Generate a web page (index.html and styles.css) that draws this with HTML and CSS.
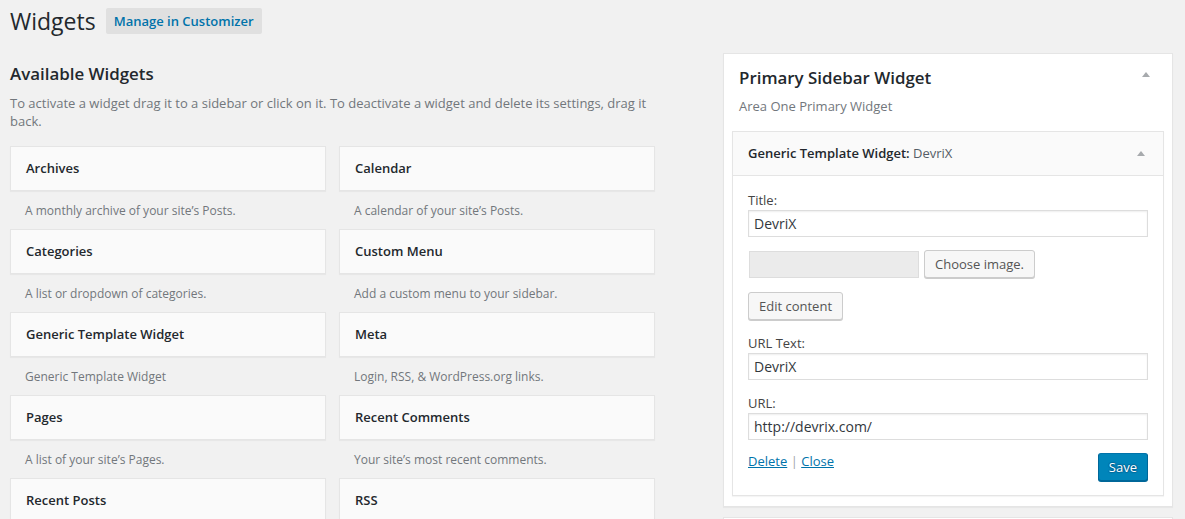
FILE: index.html
```html
<!DOCTYPE html>
<html lang="en">
<head>
<meta charset="utf-8">
<title>Widgets</title>
<link rel="stylesheet" href="styles.css">
</head>
<body>
<div class="page-head">
  <h1 class="page-title">Widgets</h1>
  <a class="title-action" href="#">Manage in Customizer</a>
</div>

<div class="main">
  <section class="available">
    <h2 class="section-title">Available Widgets</h2>
    <p class="section-desc">To activate a widget drag it to a sidebar or click on it. To deactivate a widget and delete its settings, drag it back.</p>
    <div class="widget-grid">
      <div class="widget-item"><div class="widget-top">Archives</div><div class="widget-desc">A monthly archive of your site’s Posts.</div></div>
      <div class="widget-item"><div class="widget-top">Calendar</div><div class="widget-desc">A calendar of your site’s Posts.</div></div>
      <div class="widget-item"><div class="widget-top">Categories</div><div class="widget-desc">A list or dropdown of categories.</div></div>
      <div class="widget-item"><div class="widget-top">Custom Menu</div><div class="widget-desc">Add a custom menu to your sidebar.</div></div>
      <div class="widget-item"><div class="widget-top">Generic Template Widget</div><div class="widget-desc">Generic Template Widget</div></div>
      <div class="widget-item"><div class="widget-top">Meta</div><div class="widget-desc">Login, RSS, &amp; WordPress.org links.</div></div>
      <div class="widget-item"><div class="widget-top">Pages</div><div class="widget-desc">A list of your site’s Pages.</div></div>
      <div class="widget-item"><div class="widget-top">Recent Comments</div><div class="widget-desc">Your site’s most recent comments.</div></div>
      <div class="widget-item"><div class="widget-top">Recent Posts</div><div class="widget-desc">Your site’s most recent Posts.</div></div>
      <div class="widget-item"><div class="widget-top">RSS</div><div class="widget-desc">Entries from any RSS or Atom feed.</div></div>
    </div>
  </section>

  <aside class="sidebars">
    <div class="sidebar-panel">
      <div class="sidebar-head">
        <div class="sidebar-head-row">
          <h2 class="sidebar-title">Primary Sidebar Widget</h2>
          <svg class="toggle-arrow sidebar-arrow" width="8" height="5" viewBox="0 0 8 5"><polygon points="4,0 8,5 0,5" fill="#a7aaad"/></svg>
        </div>
        <p class="sidebar-desc">Area One Primary Widget</p>
      </div>

      <div class="widget-open">
        <div class="widget-open-top">
          <span class="widget-open-title">Generic Template Widget:<span class="in-title"> DevriX</span></span>
          <svg class="toggle-arrow" width="8" height="5" viewBox="0 0 8 5"><polygon points="4,0 8,5 0,5" fill="#a7aaad"/></svg>
        </div>
        <div class="widget-form">
          <label class="field-label">Title:</label>
          <input class="text-input" type="text" value="DevriX">

          <div class="image-row">
            <input class="text-input image-input" type="text" disabled>
            <button class="btn" type="button">Choose image.</button>
          </div>

          <div class="edit-row"><button class="btn" type="button">Edit content</button></div>

          <label class="field-label spaced">URL Text:</label>
          <input class="text-input" type="text" value="DevriX">

          <label class="field-label spaced">URL:</label>
          <input class="text-input" type="text" value="http://devrix.com/">

          <div class="widget-controls">
            <div class="control-links"><a href="#">Delete</a> <span class="sep">|</span> <a href="#">Close</a></div>
            <button class="btn btn-primary" type="button">Save</button>
          </div>
        </div>
      </div>
    </div>
    <div class="sidebar-panel next-panel"></div>
  </aside>
</div>
</body>
</html>
```

FILE: styles.css
```css
html, body {
  margin: 0;
  padding: 0;
  background: #f1f1f1;
}

body {
  font-family: "Open Sans", "Noto Sans", sans-serif;
  font-size: 13px;
  line-height: 18px;
  color: #444;
}

.page-head {
  display: flex;
  align-items: center;
  height: 26px;
  padding: 8px 0 0 10px;
}

.page-title {
  margin: 0;
  font-size: 23px;
  font-weight: 400;
  line-height: 26px;
  color: #23282d;
}

.title-action {
  margin-left: 10px;
  padding: 0 8px;
  height: 26px;
  line-height: 26px;
  background: #e0e0e0;
  border-radius: 2px;
  color: #0073aa;
  font-size: 13px;
  font-weight: 600;
  text-decoration: none;
}

.main {
  display: flex;
  justify-content: space-between;
  align-items: flex-start;
  padding: 0 12px 0 10px;
}

.available {
  width: 645px;
}

.section-title {
  margin: 28px 0 0;
  font-size: 16.9px;
  font-weight: 600;
  line-height: 24px;
  color: #23282d;
}

.section-desc {
  margin: 8px 0 0;
  color: #72777c;
  line-height: 18px;
}

.widget-grid {
  display: grid;
  grid-template-columns: 316px 316px;
  column-gap: 13px;
  margin-top: 16px;
}

.widget-top {
  background: #fafafa;
  border: 1px solid #e5e5e5;
  box-shadow: 0 1px 1px rgba(0, 0, 0, 0.04);
  padding: 15px;
  font-weight: 600;
  line-height: 13px;
  color: #23282d;
}

.widget-desc {
  padding: 11px 15px 9px;
  color: #72777c;
  font-size: 12px;
  line-height: 18px;
}

.sidebars {
  width: 450px;
  margin-top: 19px;
}

.sidebar-panel {
  background: #fff;
  border: 1px solid #e5e5e5;
  box-shadow: 0 1px 1px rgba(0, 0, 0, 0.04);
  padding: 0 8px 10px;
}

.sidebar-head {
  padding: 12px 7px 16px;
}

.sidebar-head-row {
  display: flex;
  justify-content: space-between;
  align-items: flex-start;
}

.sidebar-title {
  margin: 0;
  font-size: 16.9px;
  font-weight: 600;
  line-height: 24px;
  color: #23282d;
}

.toggle-arrow {
  display: block;
  flex: none;
}

.sidebar-arrow {
  margin: 6px 7px 0 0;
}

.sidebar-desc {
  margin: 7px 0 0;
  color: #72777c;
  line-height: 18px;
}

.widget-open {
  border: 1px solid #e5e5e5;
  box-shadow: 0 1px 1px rgba(0, 0, 0, 0.04);
}

.widget-open-top {
  display: flex;
  justify-content: space-between;
  align-items: center;
  background: #fafafa;
  border-bottom: 1px solid #e5e5e5;
  padding: 15px 18px 15px 15px;
}

.widget-open-title {
  font-weight: 600;
  line-height: 13px;
  color: #23282d;
}

.in-title {
  font-weight: 400;
  color: #555d66;
}

.widget-form {
  display: flex;
  flex-direction: column;
  align-items: flex-start;
  padding: 14px 15px 14px;
}

.field-label {
  display: block;
  line-height: 20px;
  color: #444;
}

.field-label.spaced {
  margin-top: 13px;
}

.text-input {
  box-sizing: border-box;
  width: 400px;
  height: 27px;
  margin: 0;
  padding: 0 5px;
  border: 1px solid #ddd;
  box-shadow: inset 0 1px 2px rgba(0, 0, 0, 0.07);
  background: #fff;
  font-family: "Open Sans", "Noto Sans", sans-serif;
  font-size: 14px;
  color: #32373c;
  outline: none;
}

.image-row {
  display: flex;
  align-items: flex-end;
  margin-top: 13px;
}

.image-input {
  width: 170px;
  margin-left: 1px;
  background: #ebebeb;
  border-color: #ddd;
  box-shadow: none;
}

.btn {
  box-sizing: border-box;
  height: 28px;
  margin: 0 0 0 5px;
  padding: 0 10px 1px;
  background: #f7f7f7;
  border: 1px solid #ccc;
  border-radius: 3px;
  box-shadow: 0 1px 0 #ccc;
  color: #555;
  font-family: "Open Sans", "Noto Sans", sans-serif;
  font-size: 13px;
  line-height: 26px;
  cursor: pointer;
}

.edit-row {
  margin-top: 14px;
}

.edit-row .btn {
  margin-left: 0;
}

.widget-controls {
  display: flex;
  justify-content: space-between;
  align-items: flex-start;
  width: 400px;
  margin-top: 13px;
}

.control-links {
  line-height: 16px;
  color: #a0a5aa;
}

.control-links a {
  color: #0073aa;
  text-decoration: underline;
}

.btn-primary {
  margin: 0;
  background: #0085ba;
  border-color: #0073aa #006799 #006799;
  box-shadow: 0 1px 0 #006799;
  color: #fff;
  text-shadow: 0 -1px 1px #006799, 1px 0 1px #006799, 0 1px 1px #006799, -1px 0 1px #006799;
}

.next-panel {
  margin-top: 10px;
  height: 60px;
}
```
